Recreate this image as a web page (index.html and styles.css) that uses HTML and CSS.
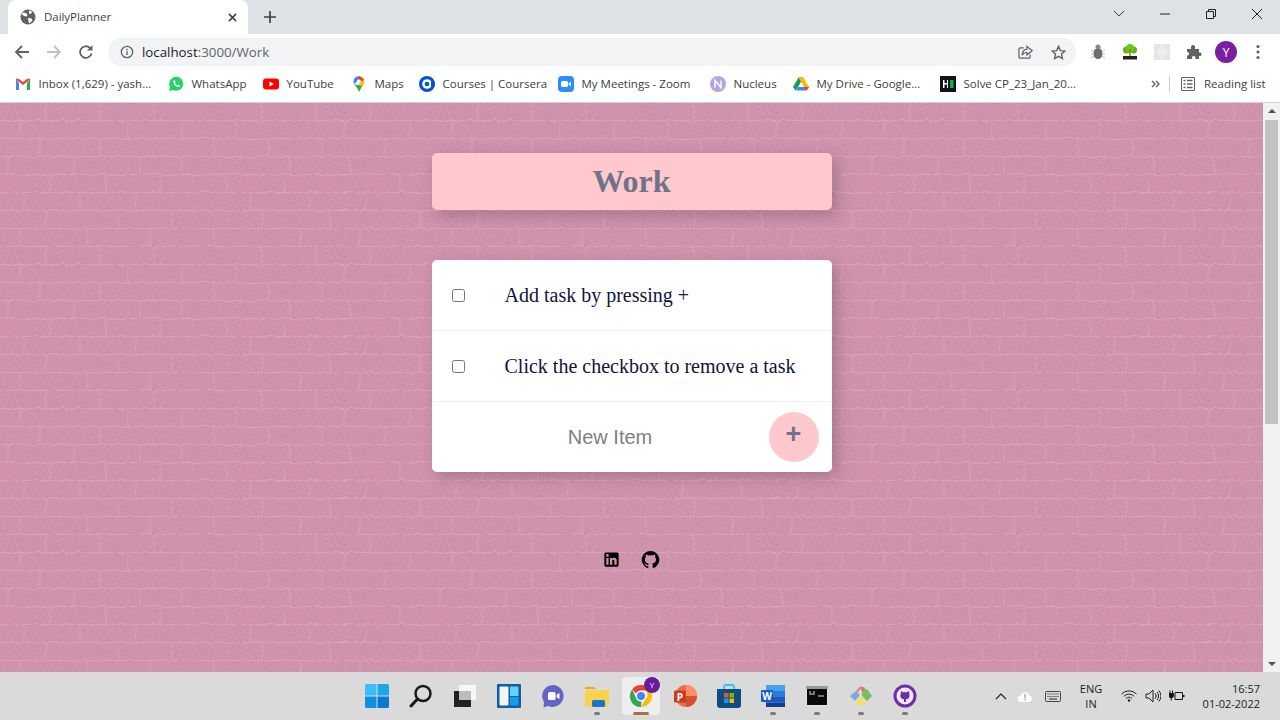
FILE: index.html
```html
<!DOCTYPE html>
<html lang="en">
<head>
<meta charset="utf-8">
<title>DailyPlanner</title>
<link rel="stylesheet" href="styles.css">
</head>
<body>
<header class="browser">
  <div class="tabstrip">
    <div class="tab">
      <svg class="tab-icon" viewBox="0 0 16 16"><circle cx="8" cy="8" r="7.5" fill="#5f6368"/><path d="M3 3.5l3 .5 1.5 2-1 1.500-2.500-.5L1.500 5zM9 1.500l3 1-1 2.500-2-.5zM8 9l3.500.5 1 2-3 3-1-2z" fill="#fff"/></svg>
      <span class="tab-title">DailyPlanner</span>
      <svg class="tab-close" viewBox="0 0 10 10"><path d="M1 1l8 8M9 1l-8 8" stroke="#3c4043" stroke-width="1.700"/></svg>
    </div>
    <svg class="new-tab" viewBox="0 0 12 12"><path d="M6 0v12M0 6h12" stroke="#3c4043" stroke-width="1.700"/></svg>
    <div class="window-controls">
      <svg class="win-chevron" viewBox="0 0 12 8"><path d="M1 1l5 5 5-5" fill="none" stroke="#3c4043"/></svg>
      <svg class="win-min" viewBox="0 0 10 2"><path d="M0 1h10" stroke="#202124"/></svg>
      <svg class="win-restore" viewBox="0 0 10 10"><path d="M.5 2.500h7v7h-7zM2.500 2.500v-2h7v7h-2" fill="none" stroke="#202124"/></svg>
      <svg class="win-close" viewBox="0 0 10 10"><path d="M0 0l10 10M10 0L0 10" stroke="#202124"/></svg>
    </div>
  </div>
  <div class="toolbar">
    <svg class="nav" viewBox="0 0 16 16"><path d="M15 8H2M8 2L2 8l6 6" fill="none" stroke="#5f6368" stroke-width="1.800"/></svg>
    <svg class="nav" viewBox="0 0 16 16"><path d="M1 8h13M8 2l6 6-6 6" fill="none" stroke="#bdc1c6" stroke-width="1.800"/></svg>
    <svg class="nav" viewBox="0 0 16 16"><path d="M13.500 9.500A5.800 5.800 0 1 1 12 4" fill="none" stroke="#5f6368" stroke-width="1.800"/><path d="M14.500 1v5.500H9z" fill="#5f6368"/></svg>
    <div class="omnibox">
      <svg class="info" viewBox="0 0 16 16"><circle cx="8" cy="8" r="6.500" fill="none" stroke="#5f6368" stroke-width="1.500"/><path d="M7.200 7h1.600v4.500H7.200zM7.200 4.300h1.600v1.600H7.200z" fill="#5f6368"/></svg>
      <span class="url"><span class="url-host">localhost</span>:3000/Work</span>
      <svg class="omni-icon" viewBox="0 0 16 16"><path d="M6 3H2.500A1.500 1.500 0 0 0 1 4.500v8A1.500 1.500 0 0 0 2.500 14h9a1.500 1.500 0 0 0 1.500-1.500V10" fill="none" stroke="#5f6368" stroke-width="1.300"/><path d="M9.500 1.500L15 6l-5.500 4.500V8C7 8 5.500 9 4.500 11c0-3.500 2-6 5-6.500z" fill="none" stroke="#5f6368" stroke-width="1.300"/></svg>
      <svg class="omni-icon star" viewBox="0 0 16 16"><path d="M8 1.500l2 4.500 4.800.5-3.600 3.200 1 4.800L8 12.100l-4.200 2.400 1-4.800L1.200 6.500 6 6z" fill="none" stroke="#5f6368" stroke-width="1.500"/></svg>
    </div>
    <div class="extensions">
      <svg class="ext" viewBox="0 0 16 16"><ellipse cx="8" cy="9.500" rx="4.500" ry="5.500" fill="#6d6d6d"/><circle cx="8" cy="3" r="2.500" fill="#8a8a8a"/><path d="M1 6l3 2M15 6l-3 2M1 10h3M15 10h-3M1 14l3-2M15 14l-3-2" stroke="#bbb"/></svg>
      <svg class="ext" viewBox="0 0 16 16"><circle cx="4.500" cy="6" r="3.500" fill="#5cb317"/><circle cx="11.500" cy="6" r="3.500" fill="#5cb317"/><circle cx="8" cy="4" r="4" fill="#6fc71f"/><path d="M8 5v7" stroke="#a8620f" stroke-width="1.400"/><rect x="1" y="12" width="14" height="3.500" fill="#222"/></svg>
      <svg class="ext" viewBox="0 0 16 16"><rect width="16" height="16" fill="#e6e6e6"/><ellipse cx="8" cy="8" rx="6" ry="2.500" fill="none" stroke="#f6f6f6"/><ellipse cx="8" cy="8" rx="2.500" ry="6" fill="none" stroke="#f6f6f6"/><circle cx="8" cy="8" r="1.500" fill="#f6f6f6"/></svg>
      <svg class="ext ext-last" viewBox="0 0 16 16"><path d="M1 5h4V3a2 2 0 0 1 4 0v2h4v3.500h1.500a2 2 0 0 1 0 3.500H13v3H9.500v-1.500a1.800 1.800 0 0 0-3.500 0V15H1v-3.500h1a2 2 0 0 0 0-3.500H1z" fill="#5f6368"/></svg>
      <span class="avatar">Y</span>
      <svg class="menu" viewBox="0 0 4 16"><circle cx="2" cy="2.500" r="1.600" fill="#5f6368"/><circle cx="2" cy="8" r="1.600" fill="#5f6368"/><circle cx="2" cy="13.500" r="1.600" fill="#5f6368"/></svg>
    </div>
  </div>
  <nav class="bookmarks">
    <div class="bm"><svg class="bm-icon" viewBox="0 0 16 16"><path d="M1 3v11h3V7z" fill="#4285f4"/><path d="M15 3v11h-3V7z" fill="#34a853"/><path d="M1 3.500l7 5.500 7-5.500V2.500L12 3 8 6 4 3 1 2.500z" fill="#ea4335"/></svg><span>Inbox (1,629) - yash...</span></div>
    <div class="bm"><svg class="bm-icon" viewBox="0 0 16 16"><path d="M1 15l1-4a7 7 0 1 1 3 3z" fill="#25d366"/><path d="M5.500 4.500l1.300-.3.900 2-.8 1c.5 1 1.300 1.700 2.300 2.200l1-.8 1.900 1-.4 1.300c-3 1-7.500-3.500-6.200-6.400z" fill="#fff"/></svg><span>WhatsApp</span></div>
    <div class="bm"><svg class="bm-icon" viewBox="0 0 16 16"><rect y="2.500" width="16" height="11" rx="3" fill="#f00"/><path d="M6.500 5.500L11 8l-4.500 2.500z" fill="#fff"/></svg><span>YouTube</span></div>
    <div class="bm"><svg class="bm-icon" viewBox="0 0 16 16"><path d="M8 0a5.500 5.500 0 0 1 5.500 5.500c0 3-3.500 5-5.500 10.500z" fill="#fbbc04"/><path d="M8 0a5.500 5.500 0 0 0-5.500 5.500c0 1 .3 1.800.8 2.700L8 3z" fill="#4285f4"/><path d="M3.300 8.200C5 10.500 7 12.500 8 16l3-6z" fill="#34a853"/><path d="M13 3l-3 3-3-3 1-3z" fill="#ea4335"/><circle cx="8" cy="5.500" r="2" fill="#fff"/></svg><span>Maps</span></div>
    <div class="bm"><svg class="bm-icon" viewBox="0 0 16 16"><circle cx="8" cy="8" r="8" fill="#0056d2"/><circle cx="8" cy="8" r="4.800" fill="#fff"/><circle cx="8" cy="8" r="2.300" fill="#0056d2"/><path d="M12 6h4v4h-4z" fill="#0056d2"/></svg><span>Courses | Coursera</span></div>
    <div class="bm"><svg class="bm-icon" viewBox="0 0 16 16"><rect width="16" height="16" rx="4" fill="#2d8cff"/><rect x="3" y="5" width="7" height="6" rx="1.500" fill="#fff"/><path d="M10.500 7.500L13 5.500v5l-2.500-2z" fill="#fff"/></svg><span>My Meetings - Zoom</span></div>
    <div class="bm"><svg class="bm-icon" viewBox="0 0 16 16"><circle cx="8" cy="8" r="8" fill="#b4a7dc"/><path d="M5 11.500v-7l6 7v-7" fill="none" stroke="#fff" stroke-width="1.400"/></svg><span>Nucleus</span></div>
    <div class="bm"><svg class="bm-icon" viewBox="0 0 16 16"><path d="M5.500 1.500h5L5 11H0z" fill="#0f9d58"/><path d="M10.500 1.500L16 11h-5L5.500 1.500z" fill="#fbbc04"/><path d="M3 14.500L5 11h11l-2.500 3.500z" fill="#4285f4"/><path d="M0 11l2.500 3.500L5 11z" fill="#0f9d58"/><path d="M13.500 14.500L16 11h-5z" fill="#ea4335"/></svg><span>My Drive - Google...</span></div>
    <div class="bm"><svg class="bm-icon" viewBox="0 0 16 16"><rect width="16" height="16" fill="#0e141e"/><path d="M3 4h1.500v3H7V4h1v8H7V8.500H4.500V12H3z" fill="#fff"/><rect x="10" y="4" width="3.500" height="8" fill="#1ba94c"/></svg><span>Solve CP_23_Jan_20...</span></div>
    <div class="bm-more">
      <svg class="bm-chev" viewBox="0 0 9 8"><path d="M1 1l3 3-3 3M5 1l3 3-3 3" fill="none" stroke="#5f6368" stroke-width="1.400"/></svg>
      <span class="bm-sep"></span>
      <svg class="bm-read" viewBox="0 0 14 14"><path d="M.5.500h13v13H.5z" fill="none" stroke="#5f6368"/><path d="M2.500 3.500h2M2.500 7h2M2.500 10.500h2M6 3.500h5.500M6 7h5.500M6 10.500h5.500" stroke="#5f6368" stroke-width="1.300"/></svg>
      <span>Reading list</span>
    </div>
  </nav>
</header>

<div class="viewport">
  <main class="page">
    <h1 class="heading">Work</h1>
    <section class="card">
      <label class="item"><input class="check" type="checkbox"><span>Add task by pressing +</span></label>
      <label class="item"><input class="check" type="checkbox"><span>Click the checkbox to remove a task</span></label>
      <form class="new-item">
        <input class="new-input" type="text" placeholder="New Item" aria-label="New Item">
        <button class="add" type="button">+</button>
      </form>
    </section>
    <footer class="social">
      <svg class="social-icon" viewBox="0 0 24 24"><path d="M19 3a2 2 0 0 1 2 2v14a2 2 0 0 1-2 2H5a2 2 0 0 1-2-2V5a2 2 0 0 1 2-2h14m-.5 15.500v-5.300a3.260 3.260 0 0 0-3.260-3.260c-.85 0-1.840.52-2.320 1.300v-1.110h-2.790v8.370h2.790v-4.930c0-.77.62-1.400 1.390-1.400a1.400 1.400 0 0 1 1.400 1.400v4.930h2.790M6.880 8.560a1.680 1.680 0 0 0 1.680-1.680c0-.93-.75-1.690-1.680-1.690a1.690 1.690 0 0 0-1.690 1.690c0 .93.76 1.680 1.690 1.680m1.390 9.940v-8.370H5.500v8.370h2.770z"/></svg>
      <svg class="social-icon" viewBox="0 0 24 24"><path d="M12 1.270a11 11 0 0 0-3.480 21.460c.55.09.73-.28.73-.55v-1.840c-3.030.64-3.670-1.460-3.670-1.460-.55-1.290-1.280-1.650-1.280-1.650-.92-.65.1-.65.1-.65 1.100 0 1.730 1.100 1.730 1.100.92 1.650 2.570 1.200 3.210.92a2 2 0 0 1 .64-1.470c-2.470-.27-5.040-1.190-5.040-5.500 0-1.100.46-2.100 1.200-2.840a3.760 3.760 0 0 1 0-2.930s.91-.28 3.110 1.100c1.800-.49 3.700-.49 5.500 0 2.100-1.380 3.020-1.100 3.020-1.100a3.760 3.760 0 0 1 0 2.930c.83.74 1.200 1.740 1.200 2.940 0 4.210-2.570 5.130-5.040 5.400.45.37.82.92.82 2.020v3.030c0 .27.1.64.73.55A11 11 0 0 0 12 1.270"/></svg>
    </footer>
  </main>
  <aside class="scrollbar">
    <span class="arrow-up"></span>
    <span class="thumb"></span>
    <span class="arrow-down"></span>
  </aside>
</div>

<footer class="taskbar">
  <div class="apps">
    <div class="app"><svg viewBox="0 0 24 24"><path d="M0 1.500A1.500 1.500 0 0 1 1.500 0H11.500v11.500H0z" fill="#3bbdf5"/><path d="M12.500 0h10A1.500 1.500 0 0 1 24 1.500v10H12.500z" fill="#1fa5ea"/><path d="M0 12.500h11.500V24h-10A1.500 1.500 0 0 1 0 22.500z" fill="#0f8fe0"/><path d="M12.500 12.500H24v10a1.500 1.500 0 0 1-1.500 1.500h-10z" fill="#0a78d0"/></svg></div>
    <div class="app"><svg viewBox="0 0 24 24"><circle cx="14" cy="9.500" r="7.500" fill="none" stroke="#1a1a1a" stroke-width="2.500"/><path d="M8.500 15L2 22" stroke="#1a1a1a" stroke-width="3" stroke-linecap="round"/></svg></div>
    <div class="app"><svg viewBox="0 0 24 24"><rect x="6" y="1" width="17" height="15" fill="#f7f7f7"/><rect x="1" y="7" width="17" height="16" fill="#222"/><rect x="6" y="7" width="12" height="9" fill="#bdbdbd"/></svg></div>
    <div class="app"><svg viewBox="0 0 24 24"><rect width="24" height="24" rx="1" fill="#0f5fa8"/><rect x="2.500" y="2.500" width="9" height="19" rx="1" fill="#f5f5f5"/><rect x="13" y="2.500" width="8.500" height="9.500" fill="#62d4fa"/><rect x="13" y="13" width="8.500" height="8.500" fill="#1a9bea"/></svg></div>
    <div class="app"><svg viewBox="0 0 24 24"><path d="M12 1a11 11 0 1 1-5 21l-4.500 1.500L3 18A11 11 0 0 1 12 1z" fill="#6264c8"/><rect x="7" y="8" width="7.500" height="8" rx="1.500" fill="#fff"/><path d="M15.500 11l3-2v6l-3-2z" fill="#fff"/></svg></div>
    <div class="app running"><svg viewBox="0 0 24 24"><path d="M0 4a1 1 0 0 1 1-1h8l2 2h-11z" fill="#e8a917"/><path d="M0 6h24v16a1 1 0 0 1-1 1H1a1 1 0 0 1-1-1z" fill="#fbd24e"/><rect x="7" y="16" width="13" height="7" rx="1.500" fill="#1876c9"/></svg></div>
    <div class="app active"><div class="chrome-wrap"><svg viewBox="0 0 24 24"><path d="M12 1a11 11 0 0 1 9.500 5.500H12A5.500 5.500 0 0 0 7 9.500L3.200 5.200A11 11 0 0 1 12 1z" fill="#ea4335"/><path d="M21.500 6.500A11 11 0 0 1 12 23l4.700-8.200a5.500 5.500 0 0 0 0-8.300z" fill="#fbbc04"/><path d="M12 23A11 11 0 0 1 3.200 5.200L7.500 15a5.500 5.500 0 0 0 5 2.500z" fill="#34a853"/><circle cx="12" cy="12" r="5.200" fill="#fff"/><circle cx="12" cy="12" r="4" fill="#4285f4"/></svg><span class="chrome-badge">Y</span></div></div>
    <div class="app"><svg viewBox="0 0 24 24"><circle cx="13" cy="12" r="11" fill="#ed6c47"/><path d="M13 1a11 11 0 0 1 11 11H13z" fill="#ff8f6b"/><path d="M13 12h11a11 11 0 0 1-11 11z" fill="#d35230"/><rect x="1" y="6.500" width="12" height="12" rx="1" fill="#c43e1c"/><text class="ppt" x="7" y="16.500" text-anchor="middle">P</text></svg></div>
    <div class="app"><svg viewBox="0 0 24 24"><path d="M7 6V3a2 2 0 0 1 2-2h6a2 2 0 0 1 2 2v3" fill="none" stroke="#35c1f1" stroke-width="1.800"/><path d="M0 5h24v16a3 3 0 0 1-3 3H3a3 3 0 0 1-3-3z" fill="#0f4c81"/><rect x="7" y="9" width="4.500" height="4.500" fill="#f25022"/><rect x="12.500" y="9" width="4.500" height="4.500" fill="#7fba00"/><rect x="7" y="14.500" width="4.500" height="4.500" fill="#00a4ef"/><rect x="12.500" y="14.500" width="4.500" height="4.500" fill="#ffb900"/></svg></div>
    <div class="app running"><svg viewBox="0 0 24 24"><rect x="5" y="1" width="19" height="6" fill="#41a5ee"/><rect x="5" y="7" width="19" height="6" fill="#2b7cd3"/><rect x="5" y="13" width="19" height="5.500" fill="#185abd"/><rect x="5" y="18.500" width="19" height="4.500" fill="#103f91"/><rect y="6" width="12" height="12" rx="1" fill="#1a5ec4"/><text class="ppt" x="6" y="16" text-anchor="middle">W</text></svg></div>
    <div class="app running"><svg viewBox="0 0 24 24"><rect x="1" y="2" width="22" height="20" fill="#e6e6e6"/><rect x="1" y="2" width="22" height="3" fill="#9a9a9a"/><rect x="2" y="5" width="20" height="16" fill="#0a0a0a"/><path d="M4 8h2M8 8h2M4 10h6M13 12h6" stroke="#ddd"/></svg></div>
    <div class="app running"><svg viewBox="0 0 24 24"><path d="M7 7l5-5 1 1-5 6z" fill="#ee6a66"/><path d="M1 12l6-5 4 4-5 6z" fill="#7ba7e8"/><path d="M13 6l5-1 5 7-5 5-5-5z" fill="#77bf62"/><path d="M6 17l5-5 6 6-5 5z" fill="#f5dc6b"/><circle cx="14" cy="5" r="2" fill="#ee6a66"/></svg></div>
    <div class="app running"><svg viewBox="0 0 24 24"><circle cx="12" cy="12" r="11.500" fill="#6f2da8"/><circle cx="12" cy="12" r="8.500" fill="#f0e8f7"/><path d="M8 7l2 1.200h4L16 7l.3 3c1 2.500-.5 5-3.300 5.300V18h-2v-2.700C8.200 15 6.700 12.500 7.700 10z" fill="#6f2da8"/></svg></div>
  </div>
  <div class="tray">
    <svg class="tray-chev" viewBox="0 0 12 7"><path d="M1 6l5-5 5 5" fill="none" stroke="#222" stroke-width="1.200"/></svg>
    <svg class="tray-cloud" viewBox="0 0 16 11"><path d="M4 11a3 3 0 0 1-.5-6 4.500 4.500 0 0 1 8.700-.5A3.300 3.300 0 0 1 12 11z" fill="#fff"/><path d="M7.400 3h1.200v4.500H7.400zM7.400 8.300h1.200v1.200H7.400z" fill="#999"/></svg>
    <svg class="tray-kbd" viewBox="0 0 16 11"><rect x=".5" y=".5" width="15" height="10" rx="1" fill="none" stroke="#222" stroke-width=".8"/><path d="M2.500 3h11M2.500 5.500h11" stroke="#222" stroke-dasharray="1 1"/><path d="M4 8h8" stroke="#222"/></svg>
    <div class="lang"><span>ENG</span><span>IN</span></div>
    <svg class="tray-wifi" viewBox="0 0 16 12"><path d="M.5 4a10.500 10.500 0 0 1 15 0M2.800 6.300a7.300 7.300 0 0 1 10.400 0M5 8.500a4.200 4.200 0 0 1 6 0" fill="none" stroke="#222" stroke-width="1"/><circle cx="8" cy="10.500" r="1.200" fill="#222"/></svg>
    <svg class="tray-sound" viewBox="0 0 16 14"><path d="M1 5h3l4-4v12l-4-4H1z" fill="none" stroke="#222"/><path d="M10 4.500a3.500 3.500 0 0 1 0 5M12 3a6 6 0 0 1 0 8M13.800 1.500a8 8 0 0 1 0 11" fill="none" stroke="#222"/></svg>
    <svg class="tray-batt" viewBox="0 0 16 12"><path d="M1 .5v3M3.500.5v3M0 3.500h4.500v2a2 2 0 0 1-4.500 0zM2.200 7v3.500" stroke="#111" fill="#111"/><path d="M6 2.500h7.500v7H6z" fill="none" stroke="#111"/><path d="M13.500 5H15.500V7H13.500z" fill="#111"/></svg>
    <div class="clock"><span>16:57</span><span>01-02-2022</span></div>
  </div>
</footer>
</body>
</html>
```

FILE: styles.css
```css
* { box-sizing: border-box; }

html, body { height: 100%; }

body {
  margin: 0;
  height: 720px;
  overflow: hidden;
  display: flex;
  flex-direction: column;
  font-family: "Open Sans", "Noto Sans", sans-serif;
  color: #3c4043;
}

svg { display: block; flex: none; }

/* Browser chrome */
.browser { flex: none; height: 103px; background: #fff; border-bottom: 1px solid #d3d3d3; }

.tabstrip {
  height: 34px;
  background: #dee1e6;
  display: flex;
  align-items: center;
  padding-left: 8px;
}

.tab {
  width: 240px;
  height: 34px;
  background: #fff;
  border-radius: 8px 8px 0 0;
  display: flex;
  align-items: center;
  padding: 0 11px 0 12px;
}

.tab-icon { width: 16px; height: 16px; }
.tab-title { flex: 1; margin-left: 8px; padding-bottom: 2px; font-size: 11.500px; letter-spacing: -.05px; color: #3c4043; }
.tab-close { width: 9px; height: 9px; }
.new-tab { width: 12px; height: 12px; margin-left: 16px; }

.window-controls { margin-left: auto; display: flex; align-items: center; height: 28px; margin-top: -6px; }
.win-chevron { width: 12px; height: 8px; margin-right: 35px; }
.win-min { width: 10px; height: 2px; margin-right: 36px; }
.win-restore { width: 10px; height: 10px; margin-right: 36px; }
.win-close { width: 10px; height: 10px; margin-right: 18px; }

.toolbar { height: 34px; display: flex; align-items: center; padding: 2px 0 0 14px; }
.nav { width: 16px; height: 16px; margin-right: 16px; }
.nav:nth-child(3) { margin-right: 14px; }

.omnibox {
  width: 968px;
  height: 28px;
  border-radius: 14px;
  background: #f1f3f4;
  display: flex;
  align-items: center;
  padding: 0 10px 0 12px;
}

.info { width: 14px; height: 14px; }
.url { flex: 1; margin-left: 8px; font-size: 13.300px; color: #5f6368; }
.url-host { color: #202124; }
.omni-icon { width: 15px; height: 15px; margin-right: 18px; }
.omni-icon.star { margin-right: 0; }

.extensions { display: flex; align-items: center; padding-left: 14px; }
.ext { width: 16px; height: 16px; margin-right: 16px; }
.ext-last { margin-right: 13px; }
.avatar {
  width: 22px;
  height: 22px;
  border-radius: 50%;
  background: #7b1fa2;
  color: #fff;
  font-size: 12px;
  display: flex;
  align-items: center;
  justify-content: center;
}
.menu { width: 4px; height: 16px; margin-left: 19px; }

.bookmarks {
  height: 34px;
  display: grid;
  grid-template-columns: 153px 95px 88px 68px 139px 152px 83px 147px 214px 1fr;
  align-items: center;
  padding: 0 0 2px 15px;
  font-size: 11.500px;
  color: #3c4043;
}

.bm { display: flex; align-items: center; white-space: nowrap; }
.bm span { padding-bottom: 2px; }
.bm-icon { width: 16px; height: 16px; margin-right: 7.500px; }
.bm-more { display: flex; align-items: center; white-space: nowrap; }
.bm-more span:last-child { padding-bottom: 2px; }
.bm-chev { width: 9px; height: 8px; margin-left: -3px; }
.bm-sep { width: 1px; height: 16px; background: #c8cacd; margin: 0 11px 0 9px; }
.bm-read { width: 14px; height: 14px; margin-right: 9px; }

/* Page */
.viewport { flex: none; height: 569px; display: flex; }

.page {
  flex: 1;
  display: flex;
  flex-direction: column;
  align-items: center;
  padding-top: 50px;
  background-color: #cd8ea9;
  background-image: url("data:image/svg+xml,%3Csvg xmlns='http://www.w3.org/2000/svg' width='432' height='144'%3E%3Cdefs%3E%3Cfilter id='w' x='0' y='0' width='100%25' height='100%25'%3E%3CfeTurbulence type='fractalNoise' baseFrequency='.12' numOctaves='2' seed='4' stitchTiles='stitch'/%3E%3CfeDisplacementMap in='SourceGraphic' scale='4'/%3E%3C/filter%3E%3Cfilter id='n' x='0' y='0' width='100%25' height='100%25'%3E%3CfeTurbulence type='fractalNoise' baseFrequency='.8' numOctaves='2' seed='9' stitchTiles='stitch'/%3E%3CfeColorMatrix values='0 0 0 0 1 0 0 0 0 .75 0 0 0 0 .85 0 0 0 1.200 -.45'/%3E%3C/filter%3E%3C/defs%3E%3Crect width='432' height='144' filter='url(%23n)' opacity='.3'/%3E%3Cg filter='url(%23w)' stroke='%23e2b4c6' stroke-opacity='.5' fill='none'%3E%3Cpath d='M0 17.500h432M0 35.500h432M0 53.500h432M0 71.500h432M0 89.500h432M0 107.500h432M0 125.500h432M0 143.500h432'/%3E%3Cpath d='M46 0v17M100 0v17M154 0v17M262 0v17M316 0v17M370 0v17M20 18v17M128 18v17M182 18v17M236 18v17M344 18v17M410 18v17M40 36v17M100 36v17M214 36v17M268 36v17M322 36v17M386 36v17M8 54v17M74 54v17M140 54v17M182 54v17M290 54v17M350 54v17M50 72v17M106 72v17M160 72v17M226 72v17M284 72v17M400 72v17M24 90v17M80 90v17M136 90v17M250 90v17M310 90v17M366 90v17M46 108v17M118 108v17M172 108v17M262 108v17M330 108v17M420 108v17M20 126v17M88 126v17M150 126v17M214 126v17M300 126v17M360 126v17'/%3E%3C/g%3E%3C/svg%3E");
}

.heading {
  width: 400px;
  height: 57px;
  margin: 0 0 50px;
  background: #ffc8cd;
  border-radius: 5px;
  box-shadow: 5px 5px 15px rgba(0, 0, 0, .2);
  font: bold 32px/57px "Liberation Serif", "Times New Roman", serif;
  color: #6e7389;
  text-align: center;
}

.card {
  width: 400px;
  background: #fff;
  border-radius: 5px;
  box-shadow: 5px 5px 15px rgba(0, 0, 0, .2);
}

.item {
  height: 71px;
  padding: 0 20px;
  display: flex;
  align-items: center;
  border-bottom: 1px solid #edeef0;
  font: 20px "Liberation Serif", "Times New Roman", serif;
  color: #10153a;
}

.check { width: 13px; height: 13px; margin: 0 40px 0 0; }

.new-item { height: 70px; display: flex; align-items: center; padding-right: 13px; }

.new-input {
  flex: 1;
  min-width: 0;
  height: 70px;
  padding: 0 0 0 20px;
  border: 0;
  outline: 0;
  background: transparent;
  text-align: center;
  font: 20px "Liberation Sans", Arial, sans-serif;
}

.new-input::placeholder { color: #808080; opacity: 1; }

.add {
  width: 50px;
  height: 50px;
  padding: 0 0 6px;
  border: 0;
  border-radius: 50%;
  background: #ffc8cd;
  color: #6e7389;
  font: bold 27px/1 "Liberation Sans", Arial, sans-serif;
  display: flex;
  align-items: center;
  justify-content: center;
}

.social { display: flex; gap: 20px; margin-top: 78px; padding-right: 1px; }
.social-icon { width: 19px; height: 19px; fill: #000; }

.scrollbar {
  flex: none;
  width: 17px;
  background: #f1f1f1;
  display: flex;
  flex-direction: column;
  align-items: center;
  padding: 6px 2px;
}

.arrow-up, .arrow-down { width: 0; height: 0; border: 4px solid transparent; flex: none; }
.arrow-up { border-top: 0; border-bottom: 4px solid #505050; margin-bottom: 7px; }
.arrow-down { border-bottom: 0; border-top: 4px solid #505050; margin-top: auto; }
.thumb { width: 13px; height: 304px; background: #c1c1c1; }

/* Taskbar */
.taskbar {
  flex: none;
  height: 48px;
  background: #dadada;
  display: flex;
  padding-left: 355px;
  color: #1a1a1a;
  font-size: 12px;
}

.apps { display: flex; }

.app {
  position: relative;
  width: 44px;
  height: 48px;
  display: flex;
  align-items: center;
  justify-content: center;
}

.app svg { width: 24px; height: 24px; }

.app.running::after,
.app.active::after {
  content: "";
  position: absolute;
  left: 19px;
  bottom: 5px;
  width: 6px;
  height: 3px;
  border-radius: 2px;
  background: #7a7a7a;
}

.app.active::before {
  content: "";
  position: absolute;
  left: 3px;
  top: 5px;
  width: 38px;
  height: 38px;
  border-radius: 4px;
  background: #eeeeee;
}

.app.active::after { left: 14px; width: 16px; background: #a5713f; }

.chrome-wrap { position: relative; z-index: 1; }
.chrome-badge {
  position: absolute;
  right: -7px;
  top: -7px;
  width: 16px;
  height: 16px;
  border-radius: 50%;
  background: #6a1b9a;
  color: #fff;
  font-size: 8px;
  line-height: 16px;
  text-align: center;
}

.ppt { font: bold 10px "Open Sans", sans-serif; fill: #fff; }

.tray { margin-left: 68px; display: flex; align-items: center; }
.tray-chev { width: 12px; height: 7px; margin-right: 10px; }
.tray-cloud { width: 16px; height: 11px; margin-right: 12px; }
.tray-kbd { width: 16px; height: 11px; margin-right: 16px; }
.lang { width: 28px; display: flex; flex-direction: column; align-items: center; line-height: 15px; font-size: 11px; margin-right: 16px; }
.tray-wifi { width: 16px; height: 12px; margin-right: 8px; }
.tray-sound { width: 16px; height: 14px; margin-right: 8px; }
.tray-batt { width: 16px; height: 12px; margin-right: 8px; }
.clock { width: 67px; display: flex; flex-direction: column; align-items: flex-end; line-height: 15px; font-size: 11px; }
```
